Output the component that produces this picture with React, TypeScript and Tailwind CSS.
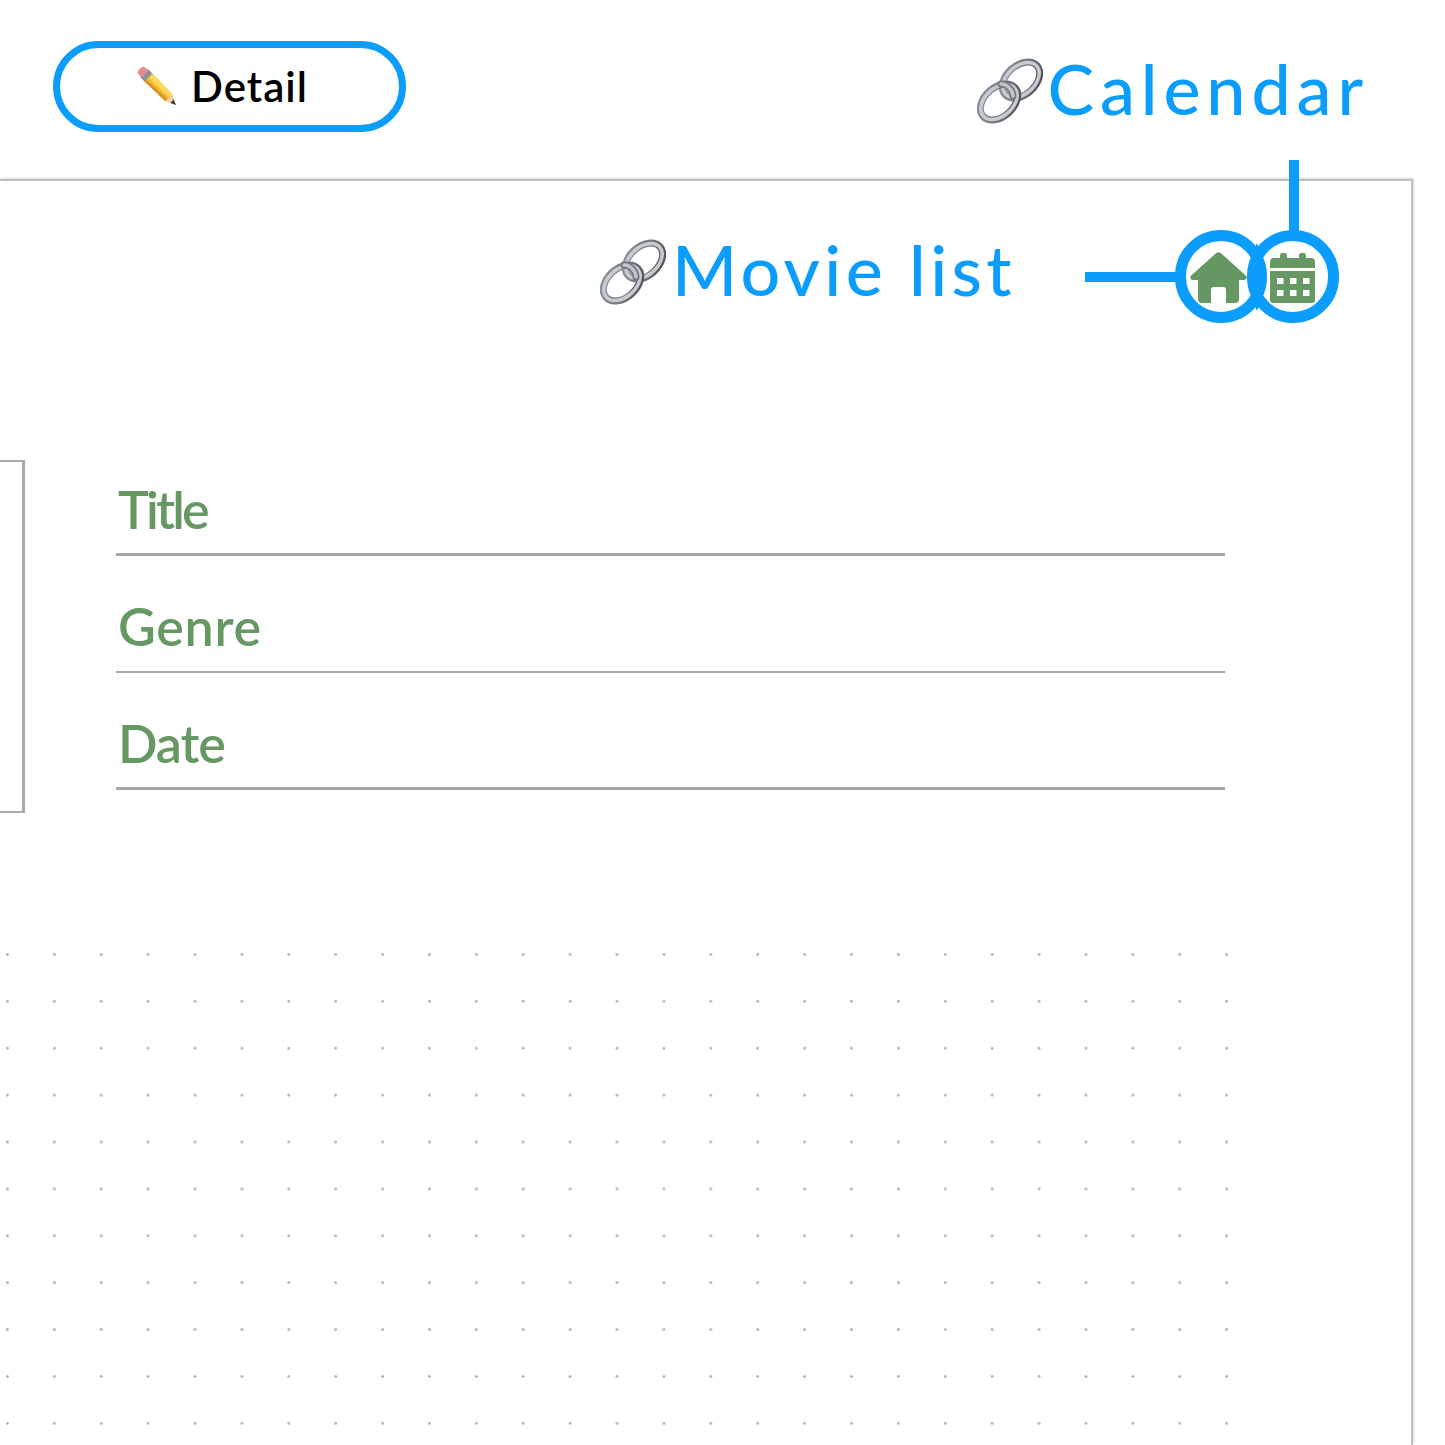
import { useId } from "react";

const fields = [
  { label: "Title", rule: "border-b-[3px]", height: "h-[96px]", pad: "pb-[18px]", text: "tracking-[-0.054em]" },
  { label: "Genre", rule: "border-b-2", height: "h-[117px]", pad: "pb-[19px]", text: "tracking-[0.014em]" },
  { label: "Date", rule: "border-b-[3px]", height: "h-[117px]", pad: "pb-[18px]", text: "tracking-[-0.02em]" },
];

function LinkIcon() {
  const id = useId();
  return (
    <svg viewBox="0 0 66 66" className="h-[66px] w-[66px] shrink-0">
      <defs>
        <linearGradient id={id} x1="0" y1="0" x2="1" y2="1">
          <stop offset="0" stopColor="#8f959d" />
          <stop offset="0.55" stopColor="#74787e" />
          <stop offset="1" stopColor="#4c4a50" />
        </linearGradient>
      </defs>
      <ellipse cx="44" cy="22" rx="21.500" ry="14.500" transform="rotate(-42 44 22)" fill="none" stroke={`url(#${id})`} strokeWidth="7" />
      <ellipse cx="44" cy="22" rx="21" ry="14" transform="rotate(-42 44 22)" fill="none" stroke="#c6cbd1" strokeWidth="3.500" />
      <ellipse cx="22" cy="44" rx="21.500" ry="14.500" transform="rotate(-42 22 44)" fill="none" stroke={`url(#${id})`} strokeWidth="7" />
      <ellipse cx="22" cy="44" rx="21" ry="14" transform="rotate(-42 22 44)" fill="none" stroke="#c6cbd1" strokeWidth="3.500" />
      <path d="M24 26c5-1 12 6 12 12" fill="none" stroke="#74787e" strokeWidth="7" strokeLinecap="round" />
      <path d="M24 26c5-1 12 6 12 12" fill="none" stroke="#c0c5cb" strokeWidth="3.500" strokeLinecap="round" />
    </svg>
  );
}

function PencilIcon() {
  return (
    <svg viewBox="0 0 40 40" className="h-[40px] w-[40px] shrink-0">
      <path d="M7 15 15 7 35 28 39 39 28 35Z" fill="#f5bd2e" />
      <path d="M11 11 15 7 35 28 32 31Z" fill="#fbd85a" />
      <path d="M7 15 28 35 30.500 33 9 13Z" fill="#d9952a" />
      <path d="M35 28.500 39 39 28.500 35Z" fill="#efd2a6" />
      <path d="M36.500 33.500 39 39 33.500 37Z" fill="#3d3a3a" />
      <path d="M3 11 11 3 15.500 7.500 7.500 15.500Z" fill="#8f9298" />
      <path d="M1 7.500C-.5 5 5-.5 7.500 1L11.500 4.500 4.500 11.500Z" fill="#e88b93" />
    </svg>
  );
}

function HomeIcon() {
  return (
    <svg viewBox="0 0 57 51" className="h-[51px] w-[57px]">
      <path
        d="M26 1.200a4 4 0 0 1 5 0L55.800 23.600c1.800 1.800.8 4.400-1.800 4.400H49v19a4 4 0 0 1-4 4H36V38a3 3 0 0 0-3-3h-9a3 3 0 0 0-3 3v13h-9a4 4 0 0 1-4-4V28H3c-2.600 0-3.600-2.600-1.800-4.400Z"
        fill="#659863"
      />
    </svg>
  );
}

function CalendarIcon() {
  return (
    <svg viewBox="0 0 45 50" className="h-[50px] w-[45px]">
      <path
        fillRule="evenodd"
        d="M10 3a3.500 3.500 0 0 1 7 0v2h12V3a3.500 3.500 0 0 1 7 0v2h5a4 4 0 0 1 4 4v6H0V9a4 4 0 0 1 4-4h6ZM0 18h45v29a3 3 0 0 1-3 3H3a3 3 0 0 1-3-3ZM7 25v6h6.500v-6Zm13 0v6h6.500v-6Zm13 0v6h6.500v-6ZM7 37v6h6.500v-6Zm13 0v6h6.500v-6Zm13 0v6h6.500v-6Z"
        fill="#659863"
      />
    </svg>
  );
}

export default function App() {
  return (
    <div className="relative h-[1445px] w-[1445px] overflow-hidden bg-white font-['Lato','Noto_Sans',sans-serif]">
      <header className="flex h-[179px] items-start justify-between pl-[53px] pr-[76px]">
        <button className="mt-[41px] flex h-[91px] w-[353px] items-center justify-center gap-[14px] rounded-full border-[7px] border-[#0a9dfd] bg-white pb-[2px] pr-[14px]">
          <PencilIcon />
          <span className="text-[42px] font-semibold leading-none tracking-[0.025em] text-black">Detail</span>
        </button>
        <a className="mt-[53px] flex items-center gap-[4px] text-[#0a9dfd]">
          <LinkIcon />
          <span className="mb-[5px] text-[70px] font-medium leading-none tracking-[0.084em]">Calendar</span>
        </a>
      </header>

      <main className="h-[1266px] w-[1413px] border-r-2 border-t-2 border-[#c0c0c0] shadow-[1px_-1px_2px_rgba(0,0,0,0.15)]">
        <div className="flex h-[279px] items-start justify-end pr-[72px] pt-[49px]">
          <a className="mr-[159px] mt-[4px] flex items-center gap-[6px] text-[#0a9dfd]">
            <LinkIcon />
            <span className="mb-[5px] text-[70px] font-medium leading-none tracking-[0.062em]">Movie list</span>
          </a>
          <div className="flex h-[93px] w-[92px] items-center justify-center rounded-full border-[11px] border-[#0a9dfd] pr-[5px] pt-[2px]">
            <HomeIcon />
          </div>
          <div className="ml-[-20px] flex h-[93px] w-[92px] items-center justify-center rounded-full border-[11px] border-[#0a9dfd] pr-[2px] pt-[2px]">
            <CalendarIcon />
          </div>
        </div>

        <section className="flex h-[353px] items-start">
          <div className="h-[353px] w-[25px] border-y-2 border-r-[3px] border-[#a9a9a9]" />
          <div className="ml-[91px] w-[1109px]">
            {fields.map((f) => (
              <div key={f.label} className={`flex items-end pl-[2px] ${f.height} ${f.rule} ${f.pad} border-[#a6a6a6]`}>
                <span className={`text-[52px] font-semibold leading-none text-[#659863] ${f.text}`}>{f.label}</span>
              </div>
            ))}
          </div>
        </section>

        <div className="mt-[118px] h-[500px] w-[1230px] bg-[radial-gradient(circle,#b4b4b4_1px,transparent_1.700px)] bg-[size:46.900px_46.900px] bg-[position:-16px_0px]" />
      </main>

      {/* callout lines */}
      <div className="absolute left-[1289px] top-[160px] h-[72px] w-[10px] bg-[#0a9dfd]" />
      <div className="absolute left-[1085px] top-[272px] h-[10px] w-[92px] bg-[#0a9dfd]" />
      <svg viewBox="0 0 20 68" className="absolute left-[1247px] top-[243px] h-[68px] w-[20px]">
        <path d="M10 0Q2 18 2 34T10 68Q18 50 18 34T10 0Z" fill="#0a9dfd" />
      </svg>
    </div>
  );
}
